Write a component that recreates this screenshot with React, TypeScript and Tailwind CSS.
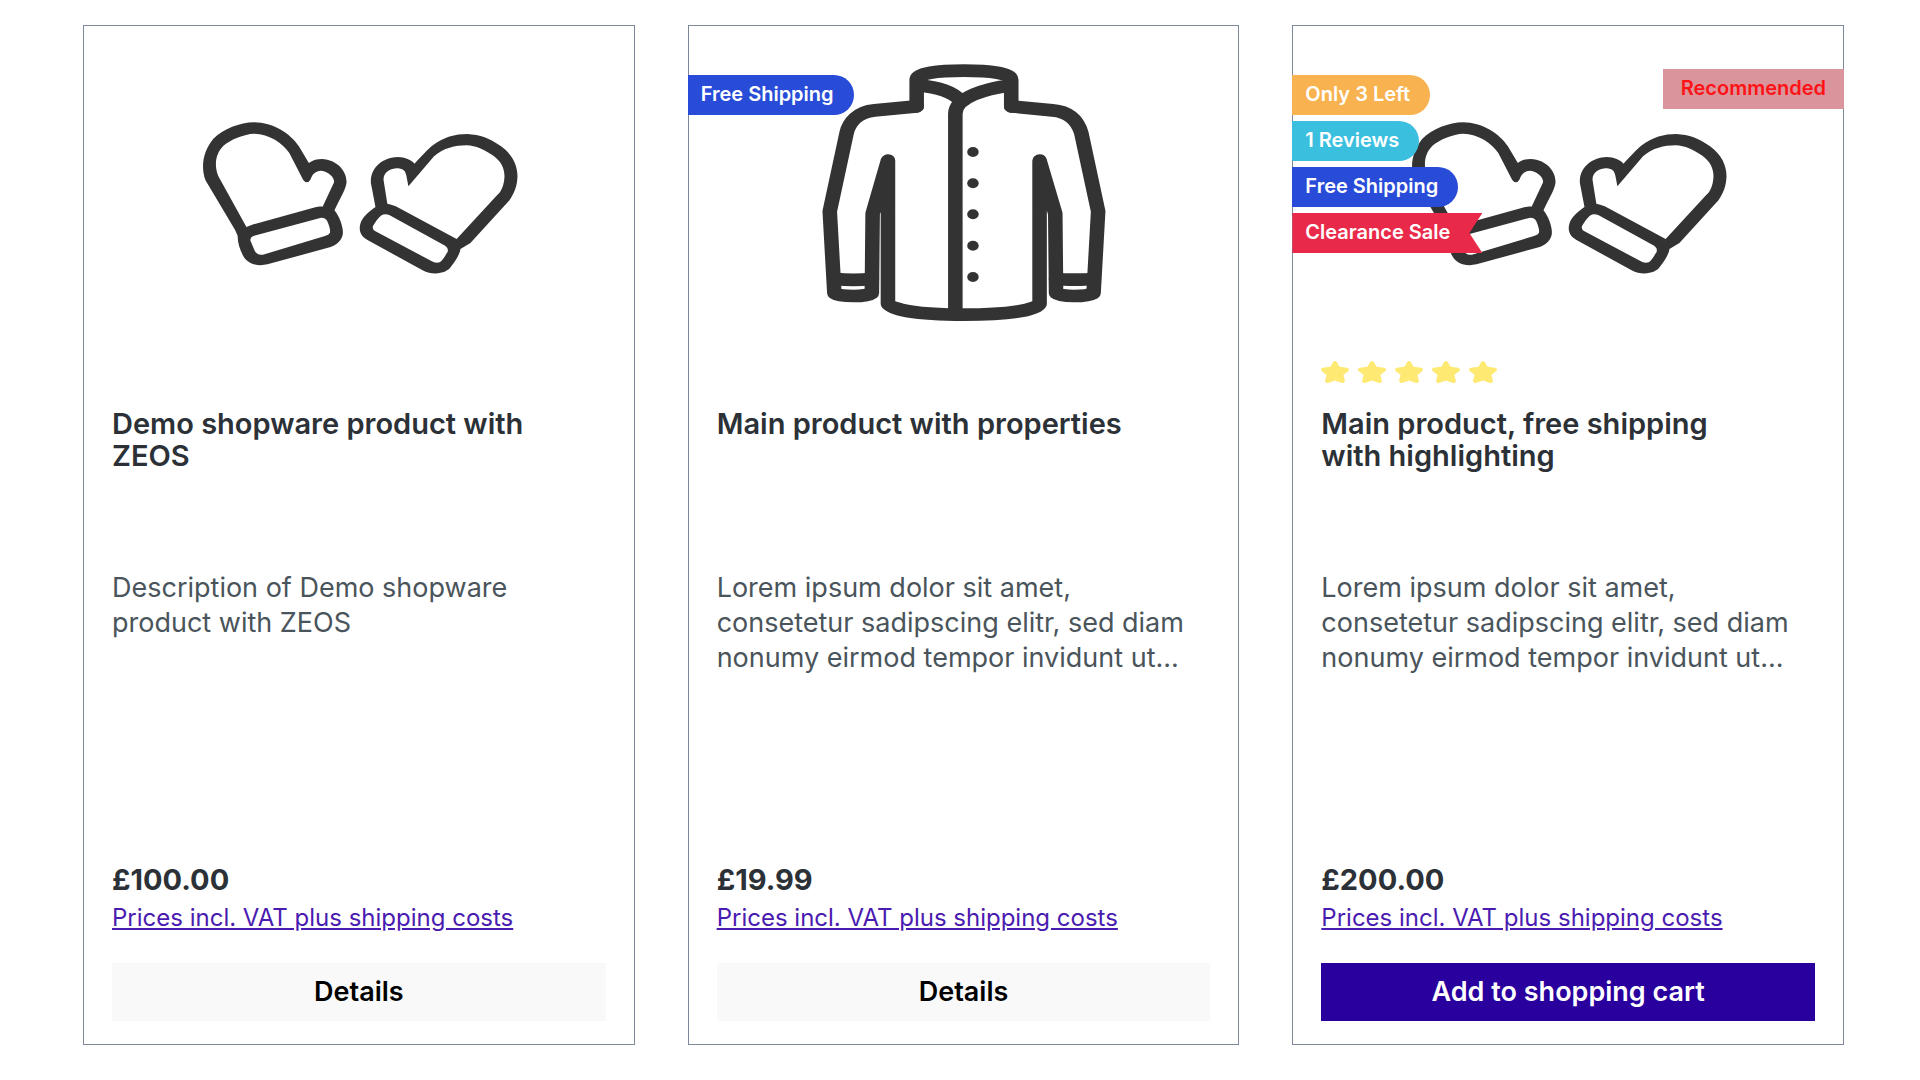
import clsx from 'clsx';

type Badge = { label: string; className: string };

type Product = {
  title: string;
  desc: string;
  price: string;
  image: 'mittens' | 'jacket';
  badges: Badge[];
  recommended?: boolean;
  rating?: number;
  buyable?: boolean;
};

const freeShipping: Badge = { label: 'Free Shipping', className: 'rounded-r-[20px] bg-[#284bd8] pr-5' };

const lorem = 'Lorem ipsum dolor sit amet,\nconsetetur sadipscing elitr, sed diam\nnonumy eirmod tempor invidunt ut...';

const products: Product[] = [
  {
    title: 'Demo shopware product with\nZEOS',
    desc: 'Description of Demo shopware\nproduct with ZEOS',
    price: '£100.00',
    image: 'mittens',
    badges: [],
  },
  {
    title: 'Main product with properties',
    desc: lorem,
    price: '£19.99',
    image: 'jacket',
    badges: [freeShipping],
  },
  {
    title: 'Main product, free shipping\nwith highlighting',
    desc: lorem,
    price: '£200.00',
    image: 'mittens',
    badges: [
      { label: 'Only 3 Left', className: 'rounded-r-[20px] bg-[#f8b24f] pr-5' },
      { label: '1 Reviews', className: 'rounded-r-[20px] bg-[#3bbfde] pr-5' },
      freeShipping,
      {
        label: 'Clearance Sale',
        className: 'bg-[#e9294a] pr-8 [clip-path:polygon(0_0,100%_0,calc(100%-13px)_50%,100%_100%,0_100%)]',
      },
    ],
    recommended: true,
    rating: 5,
    buyable: true,
  },
];

function Mittens() {
  return (
    <svg viewBox="335 145 888 810" preserveAspectRatio="none" className="h-[270px] w-[340px]" fill="#333" fillRule="evenodd" role="img" aria-label="Mittens">
      <path
        d="M455 660L378 512C365 470 372 425 398 388C425 358 468 338 505 338C555 338 600 372 622 410L648 460C660 450 670 448 682 448C725 450 750 490 746 522C742 545 725 575 715 602C728 620 737 650 737 668C737 690 722 706 705 712L540 764C510 772 485 760 475 735C468 718 462 700 462 678Z
        M485 652L411 498C400 465 405 430 425 408C440 392 480 372 505 372C545 373 580 400 597 430L633 510Q643 526 652 510C658 492 665 484 680 483C703 485 718 510 713 520L684 591C680 590 668 592 660 594L500 645Z
        M505 678L680 624Q692 624 696 634C701 648 705 660 703 670Q700 676 690 679L528 735Q512 738 506 722L495 692Q495 682 505 678Z"
      />
      <path
        d="M822 592L810 520C808 470 845 443 880 442C900 443 915 450 924 462C945 435 958 420 970 408C1000 382 1030 373 1062 373C1095 375 1120 385 1150 410C1180 435 1193 468 1193 500C1192 530 1185 550 1172 572L1070 700L1044 718C1042 735 1030 755 1020 770C1010 790 975 800 945 782L800 690C785 680 778 665 782 645C785 625 805 605 822 592Z
        M853 582L843 510C843 485 865 475 880 476C895 477 901 485 903 500L908 530L975 440C1000 415 1030 407 1060 407C1085 408 1105 420 1130 438C1150 455 1159 475 1159 500C1158 525 1152 545 1140 556L1034 688L875 590Q862 584 853 582Z
        M858 616L1004 708Q1014 716 1010 728C1003 740 998 752 990 758Q978 762 968 754L822 665Q812 658 816 648C822 636 828 626 836 618Q846 611 858 616Z"
      />
    </svg>
  );
}

function Jacket() {
  return (
    <svg viewBox="322 145 888 810" preserveAspectRatio="none" className="h-[270px] w-[340px]" fill="none" stroke="#333" strokeWidth="38" strokeLinecap="round" strokeLinejoin="round" role="img" aria-label="Jacket">
      <path d="M645 290V210C645 190 700 183 768 183C836 183 892 190 892 210V290" />
      <path d="M645 290L535 302C490 306 468 340 462 370L418 605L430 850C445 862 515 862 528 850L530 612L570 453V882C580 900 650 915 768 915C885 915 960 900 966 882V453L1007 612L1009 850C1020 862 1090 862 1107 850L1119 605L1075 370C1065 330 1040 306 1000 302L892 290" />
      <path d="M650 228C700 232 740 248 758 272M885 228C830 236 746 262 746 312V900" />
      <path d="M430 807C460 811 500 811 528 807M1009 807C1035 811 1080 811 1107 807" />
      <g fill="#333" stroke="none">
        {[427, 521, 614, 708, 802].map((cy) => (
          <circle key={cy} cx="792" cy={cy} r="15" />
        ))}
      </g>
    </svg>
  );
}

function Star() {
  return (
    <svg viewBox="0 0 28 22" preserveAspectRatio="none" className="h-[22px] w-7" fill="#fee972" aria-hidden="true">
      <path d="M12.2 1Q14 -1 15.8 1L18.6 5.8L26.2 6.8Q29 8 27.4 10L22.4 14L24 20Q23.600 22.400 21 22L14 19.400L7 22Q4.400 22.400 4 20L5.600 14L0.600 10Q-1 8 1.800 6.800L9.400 5.800Z" />
    </svg>
  );
}

function ProductCard({ product }: { product: Product }) {
  return (
    <article className="relative flex flex-col border border-[#7d899b] bg-white px-7 pt-8 pb-[23px]">
      <div className="flex justify-center">{product.image === 'mittens' ? <Mittens /> : <Jacket />}</div>

      <div className="absolute top-[49px] -left-px flex flex-col items-start gap-[6px] text-[20px] leading-[38px] font-semibold text-white">
        {product.badges.map((b) => (
          <span key={b.label} className={clsx('pb-[2px] pl-[13px]', b.className)}>
            {b.label}
          </span>
        ))}
      </div>
      {product.recommended && (
        <span className="absolute top-[43px] -right-px bg-[#d9959b] px-[18px] pb-[2px] text-[20px] leading-[38px] font-semibold text-[#ff1216]">
          Recommended
        </span>
      )}

      <div className="mt-[33px] flex h-[22px] gap-[9px]">
        {Array.from({ length: product.rating ?? 0 }, (_, i) => (
          <Star key={i} />
        ))}
      </div>

      <h2 className="mt-[25px] h-[128px] text-[29px] leading-8 font-semibold whitespace-pre-line text-[#2b3136]">
        {product.title}
      </h2>
      <p className="mt-[34px] text-[27px] leading-[35px] whitespace-pre-line text-[#4a545b]">{product.desc}</p>

      <div className="mt-auto">
        <p className="text-[29px] leading-10 font-bold text-[#2b3136]">{product.price}</p>
        <a href="#shipping" className="block text-[24px] leading-9 text-[#4a1bb0] underline">
          Prices incl. VAT plus shipping costs
        </a>
      </div>
      <button
        type="button"
        className={clsx(
          'mt-[27px] h-[58px] w-full text-[27px] font-semibold',
          product.buyable ? 'bg-[#29009e] text-white' : 'bg-[#f9f9f9] text-black',
        )}
      >
        {product.buyable ? 'Add to shopping cart' : 'Details'}
      </button>
    </article>
  );
}

export default function App() {
  return (
    <main className="min-h-screen bg-white pt-[25px] pr-[76px] pb-[35px] pl-[83px] font-['Inter',sans-serif]">
      <div className="grid auto-rows-[minmax(1020px,auto)] grid-cols-3 gap-[53px]">
        {products.map((p) => (
          <ProductCard key={p.title} product={p} />
        ))}
      </div>
    </main>
  );
}
